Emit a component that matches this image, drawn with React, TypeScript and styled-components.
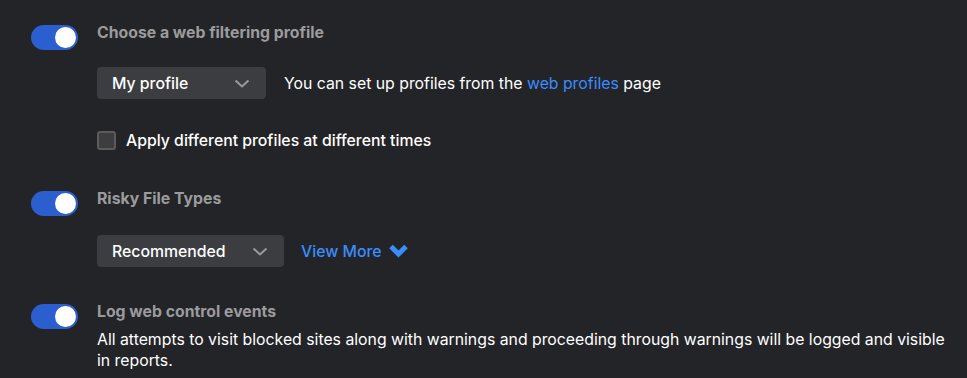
import React, { useState } from 'react';
import styled, { createGlobalStyle } from 'styled-components';

const colors = {
  page: '#232427',
  blue: '#2b5fd0',
  link: '#3b8dff',
  heading: '#9b9b9d',
  text: '#ffffff',
  field: '#3c3d40',
  chevron: '#9a9a9c',
};

const GlobalStyle = createGlobalStyle`
  html, body {
    margin: 0;
    padding: 0;
    background: ${colors.page};
  }
  body {
    font-family: Inter, "Noto Sans", Arial, sans-serif;
    font-size: 15.8px;
    color: ${colors.text};
  }
`;

const Page = styled.div`
  display: flex;
  flex-direction: column;
  padding: 25px 20px 0 31px;
`;

const Section = styled.section<{ $gap: number }>`
  display: grid;
  grid-template-columns: 47px 1fr;
  column-gap: 19px;
  margin-bottom: ${p => p.$gap}px;
`;

const Toggle = styled.button<{ $on: boolean }>`
  position: relative;
  width: 47px;
  height: 25px;
  border: none;
  border-radius: 13px;
  padding: 0;
  background: ${p => (p.$on ? colors.blue : '#555')};
  cursor: pointer;

  &::after {
    content: '';
    position: absolute;
    top: 2px;
    left: ${p => (p.$on ? '24px' : '2px')};
    width: 21px;
    height: 21px;
    border-radius: 50%;
    background: #fff;
  }
`;

const Body = styled.div`
  display: flex;
  flex-direction: column;
`;

const Heading = styled.h3`
  margin: 0;
  font-size: 15.8px;
  font-weight: 700;
  line-height: 16px;
  color: ${colors.heading};
`;

const Row = styled.div<{ $top: number }>`
  display: flex;
  align-items: center;
  margin-top: ${p => p.$top}px;
`;

const Select = styled.button<{ $width: number }>`
  display: flex;
  align-items: center;
  justify-content: space-between;
  width: ${p => p.$width}px;
  height: 32px;
  padding: 0 16px 0 15px;
  border: none;
  border-radius: 4px;
  background: ${colors.field};
  color: ${colors.text};
  font-family: inherit;
  font-size: 15.8px;
  font-weight: 500;
  cursor: pointer;
`;

const Note = styled.span`
  margin-left: 18px;
  font-weight: 400;
`;

const Link = styled.a`
  color: ${colors.link};
  text-decoration: none;
`;

const ViewMore = styled.a`
  display: flex;
  align-items: center;
  gap: 6px;
  margin-left: 17px;
  font-weight: 500;
  color: ${colors.link};
  text-decoration: none;
  cursor: pointer;
`;

const CheckRow = styled.label`
  display: flex;
  align-items: center;
  gap: 10px;
  margin-top: 32px;
  font-weight: 500;
  cursor: pointer;
`;

const Box = styled.span`
  box-sizing: border-box;
  width: 19px;
  height: 19px;
  border-radius: 3px;
  border: 2px solid #5b5b5e;
  background: #3d3d40;
`;

const Description = styled.p`
  margin: 9px 0 0;
  line-height: 21px;
  font-weight: 400;
  max-width: 852px;
`;

const Chevron = () => (
  <svg width="16" height="9" viewBox="0 0 16 9" fill="none">
    <path d="M1.5 1.5 L8 7.5 L14.5 1.5" stroke={colors.chevron} strokeWidth="2" />
  </svg>
);

const BoldChevron = () => (
  <svg width="21" height="16" viewBox="0 0 21 16" fill="none">
    <path d="M3 3.5 L10.5 11 L18 3.5" stroke={colors.link} strokeWidth="5" strokeLinejoin="miter" />
  </svg>
);

const App = () => {
  const [profile, setProfile] = useState(true);
  const [risky, setRisky] = useState(true);
  const [log, setLog] = useState(true);

  return (
    <>
      <GlobalStyle />
      <Page>
        <Section $gap={41}>
          <Toggle $on={profile} onClick={() => setProfile(!profile)} />
          <Body>
            <Heading>Choose a web filtering profile</Heading>
            <Row $top={26}>
              <Select $width={169}>
                My profile
                <Chevron />
              </Select>
              <Note>
                You can set up profiles from the <Link href="#">web profiles</Link> page
              </Note>
            </Row>
            <CheckRow>
              <Box />
              Apply different profiles at different times
            </CheckRow>
          </Body>
        </Section>

        <Section $gap={37}>
          <Toggle $on={risky} onClick={() => setRisky(!risky)} />
          <Body>
            <Heading>Risky File Types</Heading>
            <Row $top={28}>
              <Select $width={187}>
                Recommended
                <Chevron />
              </Select>
              <ViewMore>
                View More
                <BoldChevron />
              </ViewMore>
            </Row>
          </Body>
        </Section>

        <Section $gap={0}>
          <Toggle $on={log} onClick={() => setLog(!log)} />
          <Body>
            <Heading>Log web control events</Heading>
            <Description>
              All attempts to visit blocked sites along with warnings and proceeding through warnings will be
              logged and visible in reports.
            </Description>
          </Body>
        </Section>
      </Page>
    </>
  );
};

export default App;
